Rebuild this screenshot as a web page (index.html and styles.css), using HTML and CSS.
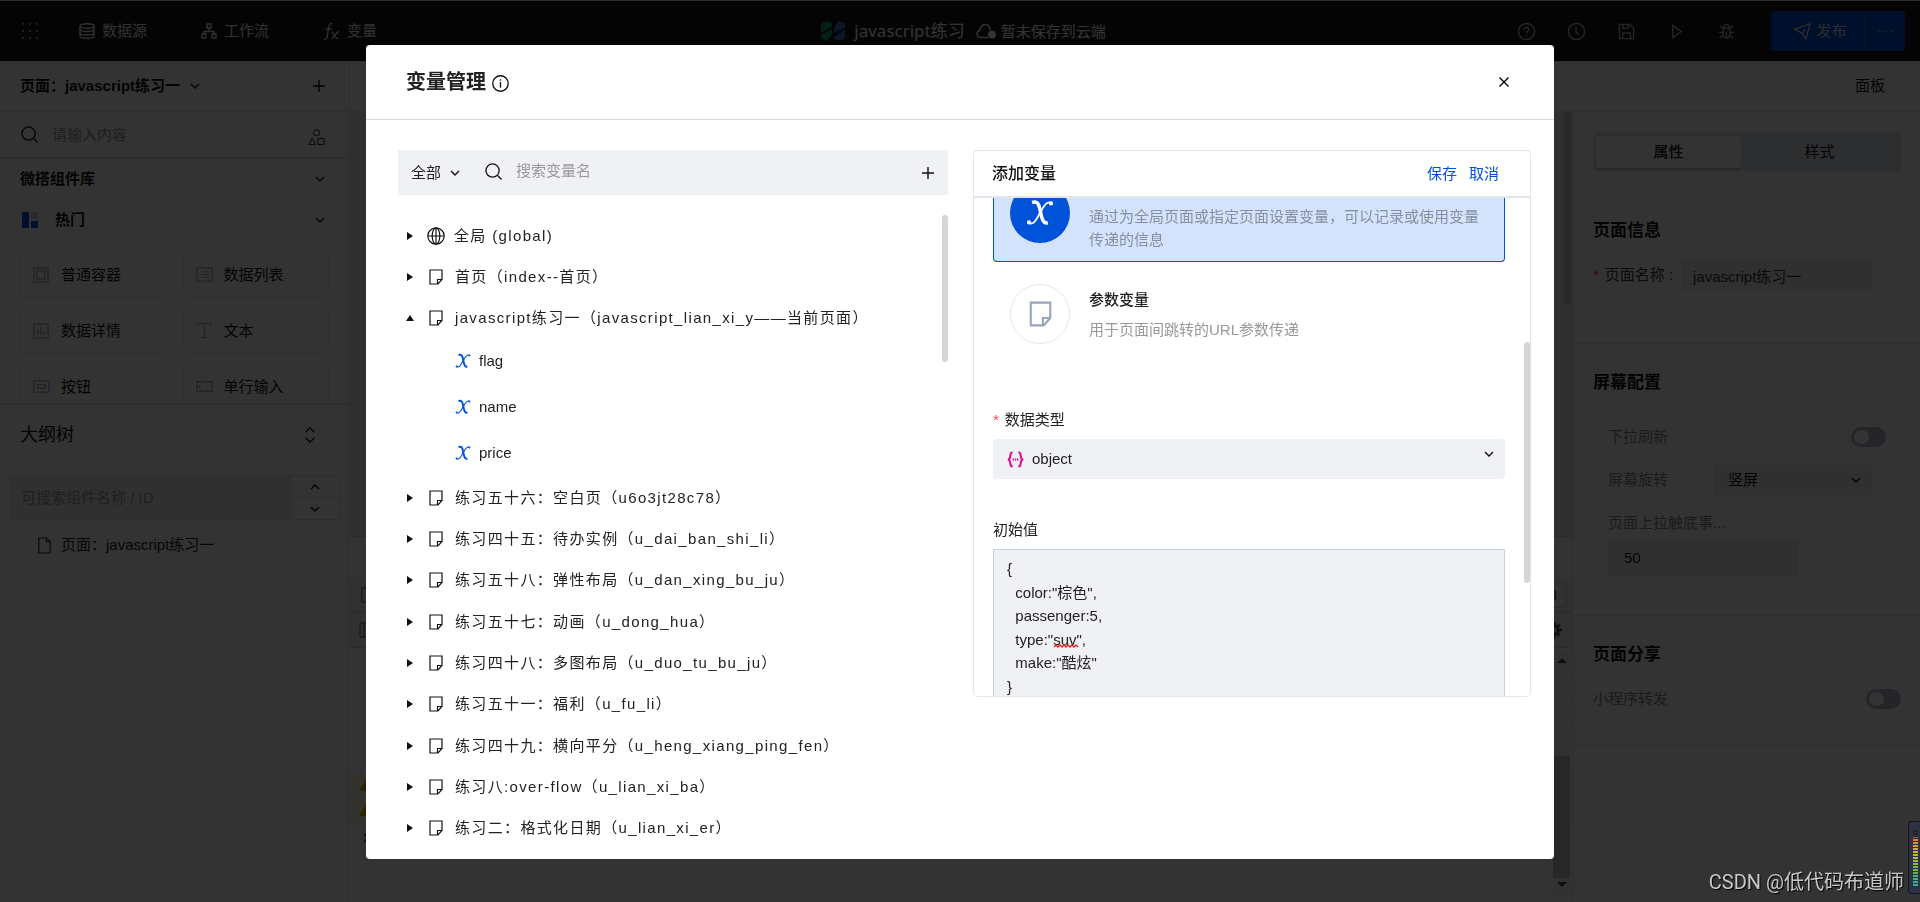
FILE: index.html
```html
<!DOCTYPE html>
<html lang="zh-CN">
<head>
<meta charset="utf-8">
<title>变量管理</title>
<link rel="stylesheet" href="styles.css">
</head>
<body>
<svg class="defs" aria-hidden="true">
  <symbol id="chev" viewBox="0 0 10 10"><path d="M1 3l4 4 4-4"/></symbol>
  <symbol id="plus" viewBox="0 0 12 12"><path d="M6 0v12M0 6h12"/></symbol>
  <symbol id="search" viewBox="0 0 18 18"><circle cx="8" cy="8" r="7"/><path d="M13 13l4.500 4.500"/></symbol>
  <symbol id="note" viewBox="0 0 14 16"><path d="M1 1h12v9.500L9 15H1zM13 10.500H8.500V15"/></symbol>
  <symbol id="var" viewBox="0 0 16 16"><path d="M3.500 2C6.500 1 7.300 2.800 8 6s1.200 8.500 4.500 7.600" stroke-width="2"/><path d="M14.600 2.200C11.500.8 9.800 5 8 8S4.500 15.500 1.400 13.600" stroke-width="1.100"/><circle cx="14.300" cy="2.500" r=".7"/><circle cx="1.700" cy="13.400" r=".7"/></symbol>
</svg>

<div class="app">
  <header class="top">
    <nav class="top-nav">
      <svg class="i16 dots" viewBox="0 0 16 16"><path d="M0 1h2M7 1h2M14 1h2M0 8h2M7 8h2M14 8h2M0 15h2M7 15h2M14 15h2"/></svg>
      <a href="#" class="nav-link nav-first"><svg class="i16 bold" viewBox="0 0 16 16"><ellipse cx="8" cy="3" rx="7" ry="2.300"/><path d="M1 3v10c0 3 14 3 14 0V3M1 6.300c0 3 14 3 14 0M1 9.700c0 3 14 3 14 0"/></svg>数据源</a>
      <a href="#" class="nav-link"><svg class="i16 bold" viewBox="0 0 16 16"><path d="M6 1h4v4H6zM1 11h4v4H1zM11 11h4v4h-4zM8 5v3M3 11V8.500h10V11"/></svg>工作流</a>
      <a href="#" class="nav-link"><svg class="i18 bold" viewBox="0 0 18 18"><path d="M10 1C7.500 0 6.500 2 6 5L4.500 14c-.4 2.500-1.500 3.500-3.500 3M2.500 6.500h7M9 9c2 0 3 8 7.500 7.500M17 9c-3 0-5 7.500-8.500 7.500"/></svg>变量</a>
    </nav>
    <div class="brand">
      <svg class="logo" viewBox="0 0 24 20"><path d="M0 3l5-3 6 2v3L0 12zM0 14l11-6v5l-5 7-6-3z" fill="#00a368"/><path d="M18 0l6 3v4l-11 5V7zM12 17l12-8v8l-5 3z" fill="#3d6dcc"/></svg>
      <span class="brand-name">javascript练习</span>
      <svg class="cloud" viewBox="0 0 20 16"><path d="M5 14.500C0 14.500 0 8 4 7.500 4.500-.5 14-.5 14 7M5 14.500h7"/><circle cx="16" cy="11.500" r="3.200" class="fill"/></svg>
      <span>暂未保存到云端</span>
    </div>
    <div class="top-tools">
      <button class="tool" aria-label="帮助"><svg class="i18 bold" viewBox="0 0 18 18"><circle cx="9" cy="9" r="8.500"/><path d="M6.500 7C6.500 3.500 11.500 3.800 11.500 7c0 1.500-2.500 1.800-2.500 3.800M9 12.500v1.500"/></svg></button>
      <button class="tool" aria-label="历史"><svg class="i18 bold" viewBox="0 0 18 18"><circle cx="9" cy="9" r="8.500"/><path d="M8.500 4v5.500l3 3"/></svg></button>
      <button class="tool" aria-label="保存"><svg class="i18 bold" viewBox="0 0 18 18"><path d="M1.500 1.500h11l4 4v11h-15zM5 1.500v4h6v-4M5 16.500v-6h8v6"/></svg></button>
      <button class="tool" aria-label="预览"><svg class="i18 bold" viewBox="0 0 18 18"><path d="M5 2.500v13l9-6.500z"/></svg></button>
      <button class="tool" aria-label="调试"><svg class="i18 bold" viewBox="0 0 18 18"><path d="M5.500 5.500h7v6c0 6-7 6-7 0zM6 5.500c0-5 6-5 6 0M9 9v7M2 3l3.500 3M16 3l-3.500 3M1 10h4.500M17 10h-4.500M2 16l3.500-3M16 16l-3.500-3"/></svg></button>
      <div class="publish">
        <button class="pub-main"><svg class="i18 bold" viewBox="0 0 18 18"><path d="M1 6.500L17 1l-4.500 16-4-6zM8.500 11l3-4"/></svg>发布</button>
        <button class="pub-more" aria-label="更多"><svg class="i18 dots" viewBox="0 0 18 18"><path d="M1 9h3M8 9h3M15 9h3"/></svg></button>
      </div>
    </div>
  </header>

  <div class="sub">
    <div class="sub-left"><button class="page-pick">页面：javascript练习一<svg class="i10 bold"><use href="#chev"/></svg></button><button class="bare" aria-label="新增页面"><svg class="i12 bold"><use href="#plus"/></svg></button></div>
    <button class="bare panel-btn">面板</button>
  </div>

  <div class="work">
    <aside class="left">
      <div class="find"><svg class="i18 bold"><use href="#search"/></svg><input class="find-in" aria-label="搜索组件" placeholder="请输入内容"><svg class="i18 shapes" viewBox="0 0 18 18"><circle cx="9" cy="4" r="3.200"/><path d="M1 16.500l3.500-7 3.500 7zM10.500 10h6.500v6.500h-6.500z"/></svg></div>
      <div class="lib">
        <div class="fold fold-a"><b>微搭组件库</b><svg class="i10 bold"><use href="#chev"/></svg></div>
        <div class="fold fold-b"><svg class="i16" viewBox="0 0 16 16"><path d="M0 0h7v16H0zM9 9h7v7H9z" fill="#0052d9" stroke="none"/><path d="M9 0h7v7H9z" fill="#c3d1f0" stroke="none"/></svg><b>热门</b><svg class="i10 bold"><use href="#chev"/></svg></div>
        <div class="cards">
          <button class="card"><svg class="i16 bold" viewBox="0 0 16 16"><path d="M1 1h14v14H1zM4 4h8v8H4z"/></svg>普通容器</button>
          <button class="card"><svg class="i18 bold" viewBox="0 0 18 18"><path d="M1 2h16v14H1zM4 6h1M7 6h7M4 9h1M7 9h7M4 12h1M7 12h7"/></svg>数据列表</button>
          <button class="card"><svg class="i16 bold" viewBox="0 0 16 16"><path d="M1 1h14v14H1zM5 12V6M8 12V4M11 12V8"/></svg>数据详情</button>
          <button class="card"><svg class="i18 bold" viewBox="0 0 18 18"><path d="M2 4V1.500h14V4M9 1.500v15M6 16.500h6"/></svg>文本</button>
          <button class="card"><svg class="i18 bold" viewBox="0 0 18 18"><path d="M1 3h16v12H1zM5 7h8v4H5z"/></svg>按钮</button>
          <button class="card"><svg class="i18 bold" viewBox="0 0 18 18"><path d="M1 4h16v10H1zM4 7v4"/></svg>单行输入</button>
        </div>
      </div>
      <div class="outline-head">大纲树<svg class="updown" viewBox="0 0 12 18"><path d="M1 6l5-5 5 5M1 12l5 5 5-5"/></svg></div>
      <div class="outline-find">
        <input class="outline-in" aria-label="搜索大纲" placeholder="可搜索组件名称 / ID">
        <div class="steps"><button aria-label="上一个"><svg class="i10 bold flip"><use href="#chev"/></svg></button><button aria-label="下一个"><svg class="i10 bold"><use href="#chev"/></svg></button></div>
      </div>
      <div class="outline-row"><svg class="i18 doc" viewBox="0 0 18 18"><path d="M3 1h8l4 4v12H3zM11 1v4h4"/></svg>页面：javascript练习一</div>
    </aside>

    <main class="mid">
      <div class="canvas"><div class="canvas-bar"></div></div>
      <div class="dev">
        <div class="dev-row dev-tint"><svg class="i16" viewBox="0 0 16 16"><path d="M3 1h12v14H3z"/></svg><span class="count">3</span></div>
        <div class="dev-row dev-tint"><svg class="i16" viewBox="0 0 16 16"><path d="M1 1h13v14H1zM5 1v14"/></svg><svg class="i16" viewBox="0 0 16 16"><circle cx="8" cy="8" r="4" stroke-width="3"/><path d="M8 0v4M8 12v4M0 8h4M12 8h4M2.500 2.500l3 3M10.500 10.500l3 3M13.500 2.500l-3 3M5.500 10.500l-3 3" stroke-width="3"/></svg></div>
        <div class="log"></div><div class="log"></div><div class="log"></div><div class="log"></div><div class="log"></div>
        <div class="log warn"><svg class="i16" viewBox="0 0 16 16"><path d="M8 2l7 12H1z"/></svg></div>
        <div class="log warn"><svg class="i16" viewBox="0 0 16 16"><path d="M8 2l7 12H1z"/></svg></div>
        <div class="prompt"><svg class="i10 thick" viewBox="0 0 10 10"><path d="M3 1l4 4-4 4"/></svg></div>
        <div class="dev-scroll"><svg class="i10" viewBox="0 0 10 10"><path d="M0 8h10L5 3z"/></svg><div class="dev-thumb"></div><svg class="i10" viewBox="0 0 10 10"><path d="M0 2h10L5 7z"/></svg></div>
      </div>
    </main>

    <aside class="right">
      <section class="sect sect-a">
        <div class="tabs"><button class="tab tab-on">属性</button><button class="tab">样式</button></div>
        <h2>页面信息</h2>
        <div class="field"><label for="pname"><span class="req">*</span>页面名称 :</label><input id="pname" class="pname" value="javascript练习一"></div>
      </section>
      <section class="sect sect-b">
        <h2>屏幕配置</h2>
        <div class="opt"><label for="pull">下拉刷新</label><input id="pull" class="switch" type="checkbox" role="switch"></div>
        <div class="opt"><label for="rotate">屏幕旋转</label><span class="pick"><select id="rotate"><option>竖屏</option></select><svg class="i10 bold"><use href="#chev"/></svg></span></div>
        <div class="opt-col"><label for="reach">页面上拉触底事...</label><input id="reach" class="reach" value="50"></div>
      </section>
      <section class="sect sect-c">
        <h2>页面分享</h2>
        <div class="share"><label for="fwd">小程序转发</label><input id="fwd" class="switch" type="checkbox" role="switch"></div>
      </section>
    </aside>
  </div>
</div>

<div class="mask">
  <div class="modal" role="dialog" aria-labelledby="mt">
    <header class="m-head"><h1 id="mt">变量管理</h1><svg class="i18 bold info" viewBox="0 0 18 18"><circle cx="9" cy="9" r="8.200"/><path d="M9 7.500v6M9 4.500v1.500"/></svg><button class="bare m-close" aria-label="关闭"><svg class="i10 bold" viewBox="0 0 10 10"><path d="M.5.5l9 9M9.500.5l-9 9"/></svg></button></header>
    <div class="m-body">
      <section class="vars">
        <div class="bar">
          <span class="scope"><select aria-label="范围"><option>全部</option></select><svg class="i10 bold"><use href="#chev"/></svg></span>
          <span class="bar-find"><svg class="i18 bold"><use href="#search"/></svg><input class="bar-in" aria-label="搜索变量" placeholder="搜索变量名"></span>
          <button class="bare" aria-label="新增变量"><svg class="i12 bold"><use href="#plus"/></svg></button>
        </div>
        <div class="tree-wrap">
          <ul class="tree">
            <li class="node"><i class="tri"></i><svg class="globe" viewBox="0 0 18 18"><circle cx="9" cy="9" r="8.200"/><ellipse cx="9" cy="9" rx="3.800" ry="8.200"/><path d="M1 9h16M9 1v16"/></svg>全局 (global)</li>
            <li class="node"><i class="tri"></i><svg class="note"><use href="#note"/></svg>首页（index--首页）</li>
            <li class="node"><i class="tri tri-up"></i><svg class="note"><use href="#note"/></svg>javascript练习一（javascript_lian_xi_y——当前页面）</li>
            <li class="leaf"><svg class="i16 var"><use href="#var"/></svg>flag</li>
            <li class="leaf"><svg class="i16 var"><use href="#var"/></svg>name</li>
            <li class="leaf"><svg class="i16 var"><use href="#var"/></svg>price</li>
            <li class="node"><i class="tri"></i><svg class="note"><use href="#note"/></svg>练习五十六：空白页（u6o3jt28c78）</li>
            <li class="node"><i class="tri"></i><svg class="note"><use href="#note"/></svg>练习四十五：待办实例（u_dai_ban_shi_li）</li>
            <li class="node"><i class="tri"></i><svg class="note"><use href="#note"/></svg>练习五十八：弹性布局（u_dan_xing_bu_ju）</li>
            <li class="node"><i class="tri"></i><svg class="note"><use href="#note"/></svg>练习五十七：动画（u_dong_hua）</li>
            <li class="node"><i class="tri"></i><svg class="note"><use href="#note"/></svg>练习四十八：多图布局（u_duo_tu_bu_ju）</li>
            <li class="node"><i class="tri"></i><svg class="note"><use href="#note"/></svg>练习五十一：福利（u_fu_li）</li>
            <li class="node"><i class="tri"></i><svg class="note"><use href="#note"/></svg>练习四十九：横向平分（u_heng_xiang_ping_fen）</li>
            <li class="node"><i class="tri"></i><svg class="note"><use href="#note"/></svg>练习八:over-flow（u_lian_xi_ba）</li>
            <li class="node"><i class="tri"></i><svg class="note"><use href="#note"/></svg>练习二：格式化日期（u_lian_xi_er）</li>
          </ul>
          <div class="thumb"></div>
        </div>
      </section>

      <section class="edit">
        <div class="e-head"><h3>添加变量</h3><button class="bare act">保存</button><button class="bare act">取消</button></div>
        <div class="e-body">
          <div class="kind kind-on">
            <span class="disc disc-on"><svg class="i32"><use href="#var"/></svg></span>
            <p class="desc">通过为全局页面或指定页面设置变量，可以记录或使用变量传递的信息</p>
          </div>
          <div class="kind">
            <span class="disc"><svg class="big-note"><use href="#note"/></svg></span>
            <div><h4>参数变量</h4><p class="desc desc-off">用于页面间跳转的URL参数传递</p></div>
          </div>
          <label class="lab lab-type" for="type"><span class="req">*</span>数据类型</label>
          <div class="type">
            <svg class="i18 obj" viewBox="0 0 18 18"><path d="M6 1.500C3.500 1.500 3.500 3 3.500 5S3.500 8.500 1 9c2.500.5 2.500 2 2.500 4s0 3.500 2.500 3.500M12 1.500c2.500 0 2.500 1.500 2.500 3.500s0 3.500 2.500 4c-2.500.5-2.500 2-2.500 4s0 3.500-2.500 3.500"/><path d="M6 9h1.500M8.300 9h1.500M10.600 9h1.500"/></svg>
            <select id="type"><option>object</option></select>
            <svg class="i10 bold type-chev"><use href="#chev"/></svg>
          </div>
          <label class="lab lab-init" for="init">初始值</label>
          <div class="init-wrap">
            <textarea id="init" class="init" spellcheck="false">{
  color:"棕色",
  passenger:5,
  type:"suv",
  make:"酷炫"
}</textarea>
            <svg class="squig" viewBox="0 0 24 4"><path d="M0 3l2-2 2 2 2-2 2 2 2-2 2 2 2-2 2 2 2-2 2 2 2-2 2 2"/></svg>
          </div>
          <div class="e-thumb"></div>
        </div>
      </section>
    </div>
  </div>
</div>

<div class="mark">CSDN @低代码布道师</div>
<div class="meter"><div class="meter-bars"></div></div>
</body>
</html>
```

FILE: styles.css
```css
* { box-sizing: border-box; }
body {
  margin: 0;
  height: 100vh;
  overflow: hidden;
  color: #111;
  background: #fff;
  font: 15px/24px "Liberation Sans", "Noto Sans CJK SC", sans-serif;
}
h1, h2, h3, h4, p, ul { margin: 0; padding: 0; }
ul { list-style: none; }
button, input, select, textarea { font: inherit; color: inherit; border: 0; padding: 0; background: none; min-width: 0; border-radius: 0; }
select { appearance: none; }
a { color: inherit; text-decoration: none; }
svg { fill: none; stroke: currentColor; stroke-width: 1; flex: none; display: block; overflow: visible; }
.defs { position: absolute; width: 0; height: 0; }
.i10 { width: 10px; height: 10px; }
.i12 { width: 12px; height: 12px; }
.i16 { width: 16px; height: 16px; }
.i18 { width: 17px; height: 17px; }
.i32 { width: 28px; height: 28px; }
.bold { stroke-width: 1.4; }
.thick { stroke-width: 2; }
.dots { stroke-width: 2; }
.flip { transform: rotate(180deg); }
.fill { fill: currentColor; }
.bare { display: flex; align-items: center; }
.req { color: #ff4040; margin-right: 6px; }
::placeholder { color: #999; opacity: 1; }

.app { height: 100vh; display: flex; flex-direction: column; }

/* Top bar */
.top {
  height: 61px;
  flex: none;
  display: grid;
  grid-template-columns: 1fr auto 1fr;
  align-items: center;
  background: #181818;
  color: #fff;
  border-top: 1px solid #e0e8e8;
  padding: 0 15px 0 22px;
}
.top-nav { display: flex; align-items: center; gap: 54px; }
.top-nav .dots { color: #999; }
.nav-link { display: flex; align-items: center; gap: 7px; color: #eee; }
.nav-first { margin-left: -13px; }
.brand { display: flex; align-items: center; gap: 5px; font-family: "Noto Sans", "Noto Sans CJK SC", sans-serif; }
.logo { width: 24px; height: 20px; margin-right: 4px; stroke: none; }
.brand-name { font-size: 17px; margin-right: 6px; }
.cloud { width: 20px; height: 16px; stroke-width: 1.5; }
.top-tools { display: flex; align-items: center; justify-content: flex-end; gap: 33px; color: #bbb; }
.publish { display: flex; height: 40px; margin-left: 3px; background: #0052d9; border-radius: 4px; }
.pub-main { width: 94px; display: flex; align-items: center; justify-content: center; gap: 5px; padding-left: 6px; border-right: 1px solid #1c66de; color: #ddd; }
.pub-more { width: 40px; display: flex; align-items: center; justify-content: center; color: #5c93e8; }

.sub { height: 51px; flex: none; display: flex; justify-content: space-between; border-bottom: 1px solid #e4e6ea; padding-right: 35px; }
.sub-left { width: 350px; display: flex; align-items: center; justify-content: space-between; padding: 0 24px 0 20px; border-right: 1px solid #e0e2e6; }
.page-pick { display: flex; align-items: center; gap: 10px; font-weight: bold; }

.work { flex: 1; min-height: 0; display: grid; grid-template-columns: 349px 1fr 348px; }

/* Component library and outline */
.left { display: flex; flex-direction: column; border-right: 1px solid #e4e6ea; overflow: hidden; }
.find { display: flex; align-items: center; gap: 14px; height: 47px; flex: none; padding: 0 23px 0 21px; border-bottom: 2px solid #e4e6ea; }
.find-in { flex: 1; }
.shapes { margin-top: 6px; }
.lib { height: 244px; flex: none; overflow: hidden; padding: 0 19px 0 20px; }
.fold { display: flex; align-items: center; justify-content: space-between; height: 42px; padding-right: 4px; }
.fold-a { height: 40px; }
.fold-b b { flex: 1; padding-left: 17px; }
.fold-b { padding-left: 2px; }
.cards { display: grid; grid-template-columns: 1fr 1fr; gap: 11px 16px; margin-top: 11px; }
.card { display: grid; grid-template-columns: 18px 1fr; align-items: center; gap: 10px; height: 45px; padding-left: 12px; text-align: left; border: 1px solid #e6e8ec; border-radius: 4px; }
.card svg { color: #a4adbb; }
.outline-head { display: flex; align-items: center; justify-content: space-between; height: 62px; flex: none; padding: 0 32px 0 20px; font-size: 18px; border-top: 2px solid #e4e6ea; }
.updown { width: 12px; height: 16px; stroke-width: 1.5; }
.outline-find { display: flex; height: 45px; flex: none; margin: 10px 8px 0 10px; }
.outline-in { flex: 1; padding: 0 11px; background: #f0f1f4; }
.steps { width: 50px; display: grid; border: 1px solid #e0e2e6; }
.steps button { display: grid; place-items: center; }
.steps button + button { border-top: 1px solid #e0e2e6; }
.outline-row { display: flex; align-items: center; gap: 8px; height: 50px; padding-left: 36px; color: #222; }
.doc { stroke-width: 1.2; }

/* Canvas and console */
.mid { display: flex; flex-direction: column; min-width: 0; }
.canvas { height: 424px; background: #ebebf0; display: flex; justify-content: flex-end; border-right: 1px solid #e0e0e0; }
.canvas-bar { width: 7px; height: 193px; background: #d0d0d0; border-radius: 0 0 4px 4px; }
.dev { flex: 1; border-top: 1px solid #d8d8d8; padding-top: 41px; position: relative; }
.dev-row { height: 35px; display: flex; align-items: center; justify-content: space-between; padding: 0 10px; border-bottom: 1px solid #ccd0d4; color: #555; }
.dev-tint { background: #f1f3f4; }
.count { border: 1px solid #ccc; border-radius: 3px; padding: 0 9px; margin-right: -5px; }
.log { height: 25px; border-bottom: 1px solid #eee; padding: 4px 9px; }
.warn { background: #fff8dc; }
.warn svg { fill: #e0a800; stroke: none; }
.prompt { padding: 10px 12px; color: #2a5bd7; }
.dev-scroll { position: absolute; right: 2px; top: 114px; bottom: 8px; width: 17px; display: flex; flex-direction: column; align-items: center; justify-content: space-between; background: #f5f5f5; padding: 4px 0; color: #444; }
.dev-scroll svg { fill: currentColor; stroke: none; }
.dev-thumb { width: 17px; height: 122px; margin-top: 88px; background: #c4c4c4; }

/* Property panel */
.right { border-left: 1px solid #e0e2e6; }
.right h2 { font-size: 17px; line-height: 26px; }
.sect { padding: 0 19px 0 20px; border-bottom: 1px solid #e6e6e6; }
.sect-a { height: 232px; padding-top: 20px; }
.tabs { display: flex; height: 40px; margin-bottom: 46px; padding: 4px 3px; background: #dfe3e8; border-radius: 6px; }
.tab { flex: 1; border-radius: 3px; }
.tab-on { flex: 0 0 48%; background: #fff; font-weight: 500; box-shadow: 0 1px 2px #aaa; }
.field { display: flex; align-items: center; margin-top: 16px; color: #333; }
.field label { width: 89px; }
.pname { width: 190px; height: 30px; padding: 0 11px; background: #f0f1f5; }
.sect-b { height: 272px; padding-top: 26px; color: #888; }
.sect h2 { color: #111; }
.opt { display: flex; align-items: center; justify-content: space-between; height: 43px; padding: 0 15px; }
.sect-b h2 { margin-bottom: 19px; }
.pick { display: flex; align-items: center; width: 159px; height: 30px; margin-right: 13px; padding: 0 12px 0 14px; color: #111; background: #f0f1f5; }
.pick select { flex: 1; }
.opt-col { display: flex; flex-direction: column; gap: 5px; padding: 10px 0 0 15px; }
.reach { width: 190px; height: 35px; padding: 0 15px; color: #111; background: #f0f1f5; border: 1px solid #e8eaee; }
.switch { appearance: none; width: 35px; height: 20px; margin: 0; padding: 3px; border-radius: 10px; background: #b4bac6; }
.switch::before { content: ""; display: block; width: 15px; height: 14px; border-radius: 7px; background: #fff; }
.sect-c { height: 130px; padding-top: 26px; color: #888; }
.share { display: flex; align-items: center; justify-content: space-between; height: 24px; margin-top: 19px; }

/* Dialog */
.mask { position: fixed; inset: 0; padding: 45px 0 43px; background: rgba(0, 0, 0, .8); display: flex; justify-content: center; }
.modal { width: 62%; max-width: 1188px; display: flex; flex-direction: column; background: #fff; border-radius: 4px; overflow: hidden; color: #222; }
.m-head { display: flex; align-items: center; gap: 6px; height: 75px; flex: none; padding: 0 45px 0 40px; border-bottom: 1px solid #d8dae6; }
.m-head h1 { font-size: 20px; line-height: 30px; }
.info { color: #111; margin-top: 2px; }
.m-close { margin-left: auto; color: #000; }
.m-body { flex: 1; min-height: 0; display: grid; grid-template-columns: 550fr 558fr; gap: 25px; padding: 30px 23px 10px 32px; }
.vars { display: flex; flex-direction: column; }
.bar { display: flex; align-items: center; height: 45px; flex: none; padding: 0 14px 0 13px; background: #f0f1f5; }
.scope { display: flex; align-items: center; gap: 8px; margin-right: 25px; }
.scope svg, .bar svg { color: #111; }
.bar-find { flex: 1; display: flex; align-items: center; gap: 14px; padding-bottom: 3px; }
.bar-in { flex: 1; }
.tree-wrap { flex: 1; display: flex; justify-content: space-between; padding-top: 20px; }
.tree { display: flex; flex-direction: column; }
.node { flex: 1; display: flex; align-items: center; padding-left: 9px; letter-spacing: .09em; white-space: nowrap; }
.node svg { stroke-width: 1.2; color: #111; }
.globe { width: 18px; height: 18px; margin: 0 9px 0 14px; }
.note { width: 14px; height: 16px; margin: 0 12px 0 16px; }
.tri { border: 4px solid transparent; border-left: 6px solid #111; border-right: 0; }
.tri-up { border: 4px solid transparent; border-bottom: 6px solid #111; border-top: 0; margin: 0 -1px; }
.leaf { display: flex; align-items: center; gap: 8px; height: 46px; flex: none; padding: 0 0 2px 57px; }
.var { color: #0052d9; }
.thumb { width: 6px; height: 147px; border-radius: 3px; background: #d5d5d5; }

/* Variable editor */
.edit { align-self: start; border: 1px solid #e3e6ec; border-radius: 4px; overflow: hidden; }
.e-head { display: flex; align-items: center; gap: 12px; height: 47px; padding: 0 31px 0 18px; border-bottom: 2px solid #e3e6ec; }
.e-head h3 { flex: 1; font-size: 16px; color: #111; font-weight: 500; }
.act { color: #0052d9; }
.e-body { position: relative; height: 498px; padding: 0 25px 0 19px; overflow: hidden; }
.kind { display: flex; align-items: flex-start; gap: 19px; padding: 22px 17px 0; }
.kind-on { height: 64px; padding: 0 16px; border: 1px solid #0052d9; border-top: 0; border-radius: 0 0 4px 4px; background: #d4e3fc; }
.disc { width: 60px; height: 60px; flex: none; display: grid; place-items: center; border: 1px solid #e6e8ec; border-radius: 50%; color: #98a6bd; }
.disc-on { margin-top: -15px; background: #0052d9; border: 0; color: #fff; }
.big-note { width: 23px; height: 26px; stroke-width: 1.3; }
.kind h4 { font-weight: 500; font-size: 15px; margin-top: 4px; }
.desc { color: #86909f; margin-top: 7px; line-height: 23px; }
.desc-off { color: #999; margin-top: 6px; line-height: 24px; }
.lab { display: block; }
.lab-type { margin: 64px 0 7px; }
.type { display: flex; align-items: center; gap: 8px; height: 40px; padding: 0 11px 0 14px; background: #f0f1f5; border-radius: 4px; }
.type select { flex: 1; }
.type-chev { margin-bottom: 10px; color: #111; }
.obj { color: #e6008f; stroke-width: 2; }
.lab-init { margin: 39px 0 7px; }
.init-wrap { position: relative; }
.init { display: block; width: 100%; height: 200px; padding: 7px 13px; resize: none; overflow: hidden; line-height: 1.57; background: #f0f1f5; border: 1px solid #c8d2e0; }
.squig { position: absolute; left: 61px; top: 95px; width: 24px; height: 4px; color: #f02020; stroke-width: 1.4; }
.e-thumb { position: absolute; right: 0; top: 144px; width: 6px; height: 241px; border-radius: 3px; background: #d5d5d5; }

/* Watermark and level meter over the page */
.mark { position: fixed; right: 16px; bottom: 5px; font: 20px/30px Roboto, "Noto Sans CJK SC", sans-serif; color: #c8c8c8; text-shadow: 1px 1px 1px #000; }
.meter { position: fixed; right: 0; bottom: 8px; width: 12px; height: 73px; padding: 8px 2px 7px 4px; background: #2c3145; border: 1px solid #15171f; border-right: 0; border-radius: 4px 0 0 4px; }
.meter-bars { height: 100%; background: repeating-linear-gradient(transparent 0 2px, #2c3145 2px 3px), linear-gradient(#222 0 12%, #e07040 14%, #d0b040 35%, #b8c040 50%, #60b050 75%, #30b0a0); }
```
